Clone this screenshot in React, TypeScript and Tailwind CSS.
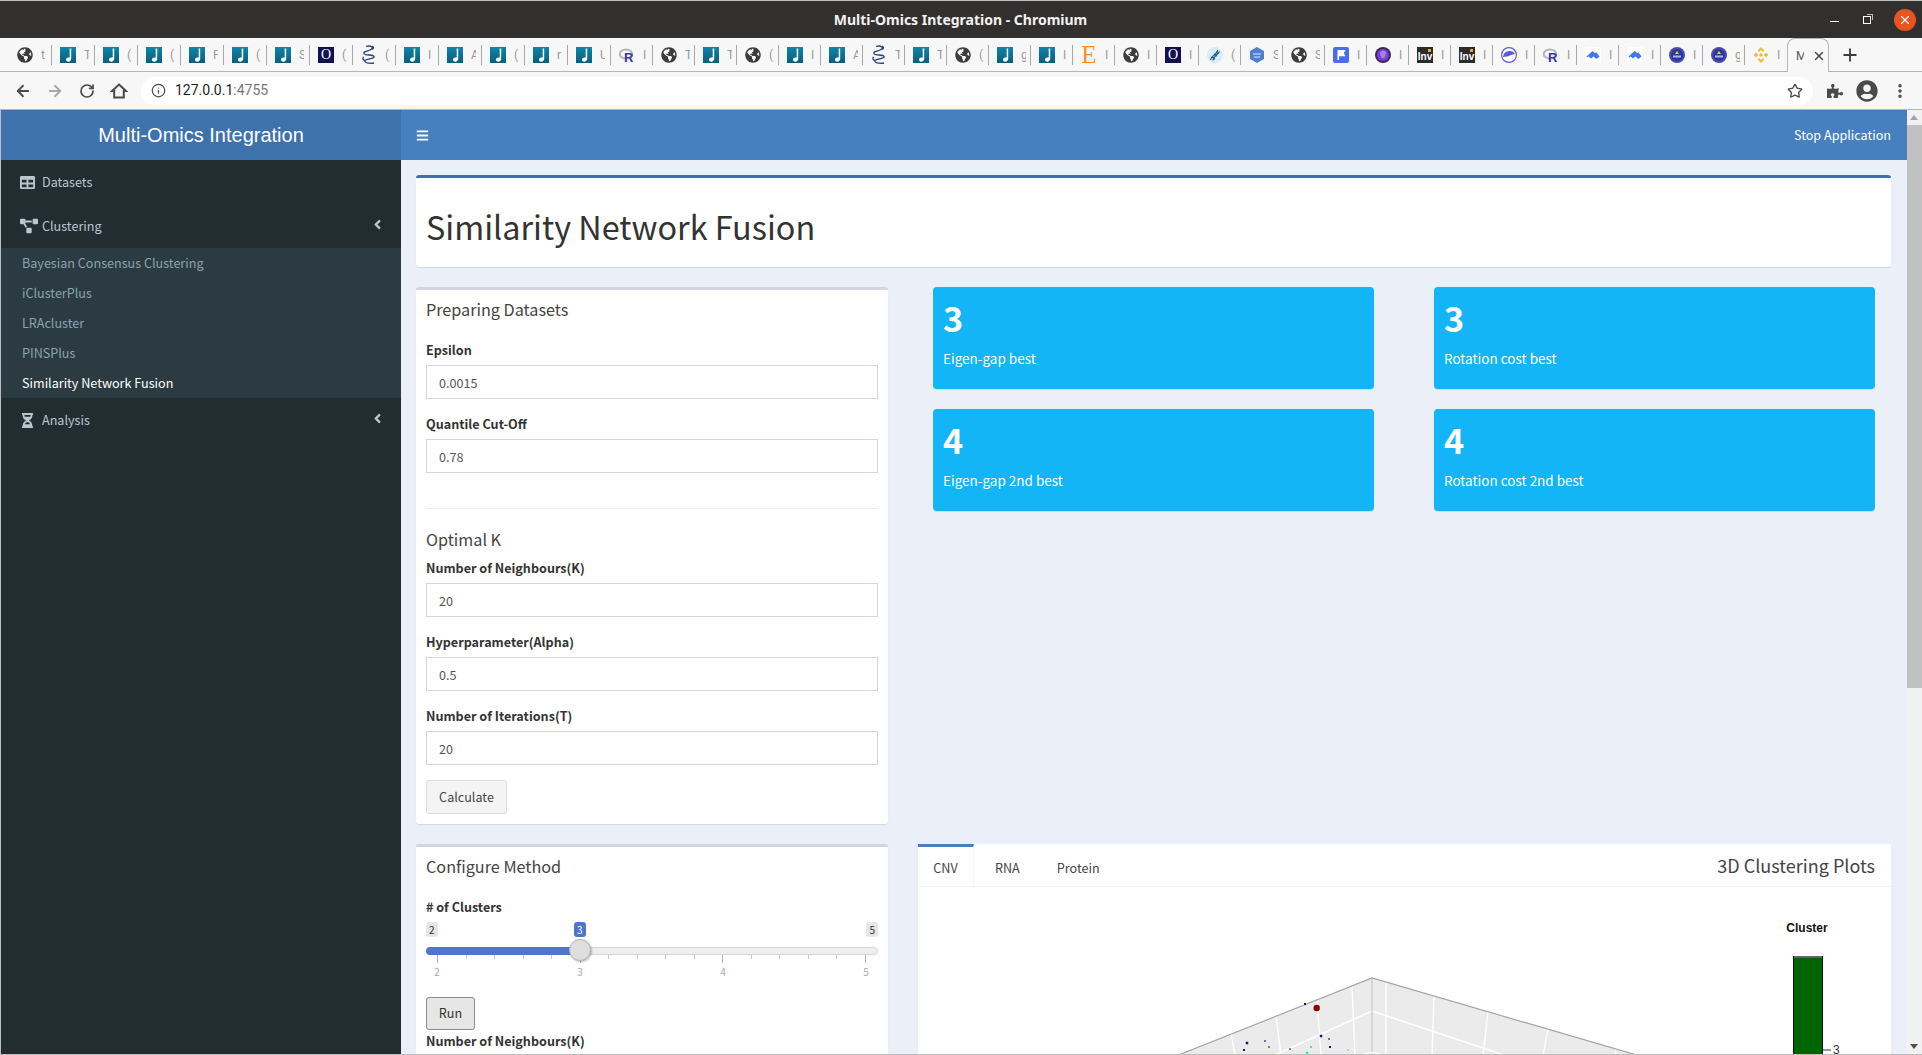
import type { ReactNode } from 'react'
import { ArrowLeft, ArrowRight, Info, MoreVertical, Plus, RotateCw, Star, X } from 'lucide-react'
import {
  FaAngleLeft,
  FaBars,
  FaGlobeAmericas,
  FaHourglassHalf,
  FaProjectDiagram,
  FaPuzzlePiece,
  FaTable,
  FaUserCircle,
} from 'react-icons/fa'

type TabKind =
  | 'globe'
  | 'note'
  | 'o'
  | 'helix'
  | 'r'
  | 'e'
  | 'dna'
  | 'hex'
  | 'flag'
  | 'orb'
  | 'inv'
  | 'disc'
  | 'cloud'
  | 'badge'
  | 'binance'

const tabs: [TabKind, string][] = [
  ['globe', 't'],
  ['note', 'T'],
  ['note', '('],
  ['note', '('],
  ['note', 'F'],
  ['note', '('],
  ['note', 'S'],
  ['o', '('],
  ['helix', '('],
  ['note', 'I'],
  ['note', 'A'],
  ['note', '('],
  ['note', 'r'],
  ['note', 'U'],
  ['r', 'I'],
  ['globe', 'T'],
  ['note', 'T'],
  ['globe', '('],
  ['note', 'I'],
  ['note', 'A'],
  ['helix', 'T'],
  ['note', 'T'],
  ['globe', '('],
  ['note', 'g'],
  ['note', 'I'],
  ['e', 'I'],
  ['globe', 'I'],
  ['o', 'I'],
  ['dna', '('],
  ['hex', 'S'],
  ['globe', 'S'],
  ['flag', 'I'],
  ['orb', 'I'],
  ['inv', 'I'],
  ['inv', 'I'],
  ['disc', 'I'],
  ['r', 'I'],
  ['cloud', 'I'],
  ['cloud', 'I'],
  ['badge', 'I'],
  ['badge', 'g'],
  ['binance', 'I'],
]

const Favicon = ({ kind }: { kind: TabKind }) => {
  if (kind === 'globe') return <FaGlobeAmericas className="size-4 text-[#3c3c3c]" />
  if (kind === 'note')
    return (
      <span className="flex size-4 items-center justify-center bg-gradient-to-b from-[#0d86ab] to-[#0b5d7a]">
        <svg viewBox="0 0 16 16" className="size-4">
          <path d="M9.700 1.500h1.500v10.300c0 1.700-1.300 2.900-3 2.900-1.300 0-2.300-.8-2.300-1.900 0-1.400 1.300-2.300 2.800-2.300.4 0 .7 0 1 .1z" fill="#fff" />
        </svg>
      </span>
    )
  if (kind === 'o')
    return (
      <span className="flex size-4 items-center justify-center bg-[#12104f] font-['Liberation_Serif',serif] text-[14px] leading-4 text-white">
        O
      </span>
    )
  if (kind === 'helix')
    return (
      <svg viewBox="0 0 16 20" className="h-5 w-4">
        <path
          d="M5 1.500c5-1.500 8 1 5 3S2 6 3 8.500s9 .5 10 3-8 2-9 4 4 3.500 9 2.500M11 1c2 1 2 2.500 0 3.500M3 12c-2 1-1 3 1 3.500"
          fill="none"
          stroke="#2f3f7f"
          strokeWidth="1.300"
        />
      </svg>
    )
  if (kind === 'r')
    return (
      <svg viewBox="0 0 16 16" className="size-4">
        <ellipse cx="7" cy="7" rx="6.200" ry="4.600" fill="none" stroke="#b4b4bc" strokeWidth="2" />
        <text x="5" y="15" fontSize="13" fontWeight="700" fontFamily="Liberation Sans, sans-serif" fill="#3a35a8">
          R
        </text>
      </svg>
    )
  if (kind === 'e')
    return (
      <span className="font-['Liberation_Serif',serif] text-[25px] leading-6 text-[#f7931e]">E</span>
    )
  if (kind === 'dna')
    return (
      <svg viewBox="0 0 16 16" className="size-4">
        <circle cx="8" cy="8" r="8" fill="#d6ecf8" />
        <path d="M3.500 13C5 7 9 9 11 3M6 13.500C6 9 11 8 12.500 4.500M5 10l3 2M7 7l3 2M9 5l2.500 1.500" fill="none" stroke="#2c5a78" strokeWidth="1.200" />
      </svg>
    )
  if (kind === 'hex')
    return (
      <svg viewBox="0 0 16 16" className="size-4">
        <path d="M8 0l7 4v8l-7 4-7-4V4z" fill="#4f7fd0" />
        <path d="M4 7h8M5 10h6" stroke="#dbe6f8" strokeWidth="1" />
      </svg>
    )
  if (kind === 'flag')
    return (
      <svg viewBox="0 0 16 16" className="size-4">
        <rect width="16" height="16" rx="2" fill="#4a6cf0" />
        <path d="M4.500 3v10h1.600V9.300h6.400L10.800 6.300 12.500 3z" fill="#fff" />
      </svg>
    )
  if (kind === 'orb')
    return (
      <svg viewBox="0 0 16 16" className="size-4">
        <circle cx="8" cy="8" r="8" fill="#3a2a55" />
        <circle cx="8" cy="8" r="6" fill="#7a3fd6" />
        <path d="M5 6.500a3 3 0 0 1 6 0c0 2-1.500 2.500-1.500 4.500h-3C6.500 9 5 8.500 5 6.500z" fill="#a582ee" />
      </svg>
    )
  if (kind === 'inv')
    return (
      <span className="relative flex size-4 items-end justify-center bg-[#2b2b2b] font-['Liberation_Sans',sans-serif] text-[10px] font-bold leading-[13px] text-white">
        Inv
        <span className="absolute right-0.5 top-0.5 size-[3px] bg-[#f2a81d]" />
      </span>
    )
  if (kind === 'disc')
    return (
      <svg viewBox="0 0 16 16" className="size-4">
        <circle cx="8" cy="8" r="7.400" fill="#fff" stroke="#5a5ad6" strokeWidth="1.200" />
        <path d="M2 10c3 0 6-1 8-2l4-1a6.500 6.500 0 0 0-12 3z" fill="#5a5ad6" />
      </svg>
    )
  if (kind === 'cloud')
    return (
      <svg viewBox="0 0 16 16" className="size-4">
        <rect width="16" height="16" rx="2" fill="#fff" />
        <path d="M1.500 9.500L7.500 4l2.500 2 1.500-.5 3 4-3 2.500-3-2.500-2.500 2-2.500-2-1.500 1z" fill="#3f78f2" />
      </svg>
    )
  if (kind === 'badge')
    return (
      <svg viewBox="0 0 16 16" className="size-4">
        <circle cx="8" cy="8" r="8" fill="#4b48b8" />
        <circle cx="8" cy="8" r="6" fill="#2b3a90" />
        <path d="M8 4l2 3H6z" fill="#e8d24a" />
        <rect x="4" y="8.500" width="8" height="2" fill="#a9b6e8" />
      </svg>
    )
  return (
    <svg viewBox="0 0 16 16" className="size-4">
      <g fill="#f3ba2f">
        <path d="M8 0l3.400 3.400-1.500 1.500L8 3 6.100 4.900 4.600 3.400z" />
        <path d="M8 16l3.400-3.400-1.500-1.500L8 13l-1.900-1.900-1.500 1.500z" />
        <path d="M3 5.700L5.300 8 3 10.300.7 8zM13 5.700L15.300 8 13 10.300 10.700 8zM8 5.900L10.100 8 8 10.100 5.900 8z" />
      </g>
    </svg>
  )
}

const TabStrip = () => (
  <div className="flex h-[34px] border-b border-[#b5b5b5] bg-[#f7f7f7] pl-[9px] font-['Roboto',sans-serif]">
    {tabs.map(([kind, letter], index) => (
      <div key={index} className={index < 14 ? 'flex w-[43px] items-center pl-2' : 'flex w-[42px] items-center pl-2'}>
        <span className="flex w-4 shrink-0 justify-center">
          <Favicon kind={kind} />
        </span>
        <span className="ml-2 w-[5px] overflow-hidden text-[12px] text-[#999]">{letter}</span>
        {index < tabs.length - 1 && <span className="ml-auto h-[20px] w-px bg-[#a8a8a8]" />}
      </div>
    ))}
    <div className="relative -mb-px flex w-[42px] items-center rounded-t-lg border border-b-0 border-[#b5b5b5] bg-[#f7f7f7] pl-2">
      <span className="w-[8px] overflow-hidden text-[12px] text-[#555]">M</span>
      <X size={14} strokeWidth={2.5} className="ml-2 text-[#444]" />
    </div>
    <Plus size={20} strokeWidth={2.2} className="ml-[11px] mt-[7px] text-[#3c3c3c]" />
  </div>
)

const TitleBar = () => (
  <div className="flex h-[37px] items-center bg-[#32302f]">
    <span className="ml-[832px] w-[257px] whitespace-nowrap text-center font-['Noto_Sans',sans-serif] text-[14px] font-bold text-[#f2f2f2]">
      Multi-Omics Integration - Chromium
    </span>
    <span className="ml-[741px] mt-1 h-px w-[9px] bg-white" />
    <span className="relative ml-[24px] size-[8px] border border-white">
      <span className="absolute -right-[3px] -top-[3px] size-[6px] border-r border-t border-[#bbb]" />
    </span>
    <span className="ml-[23px] flex size-[22px] items-center justify-center rounded-full bg-[#e95420]">
      <X size={14} strokeWidth={2} className="text-white" />
    </span>
  </div>
)

const AddressBar = () => (
  <div className="flex h-[38px] items-center border-b border-[#b5b5b5] bg-[#f7f7f7] text-[#4a4a4a]">
    <ArrowLeft size={18} strokeWidth={2.4} className="ml-[14px]" />
    <ArrowRight size={18} strokeWidth={2.4} className="ml-[14px] text-[#a8a8a8]" />
    <RotateCw size={16} strokeWidth={2.6} className="ml-[15px]" />
    <svg viewBox="0 0 18 18" className="ml-[15px] size-[18px]">
      <path d="M9 2.500L16 9h-2.200v6.500H4.200V9H2z" fill="none" stroke="currentColor" strokeWidth="2" />
    </svg>
    <div className="ml-[13px] flex h-7 w-[1672px] items-center rounded-full bg-white pl-[10px]">
      <Info size={15} strokeWidth={2} />
      <span className="ml-[9px] font-['Roboto',sans-serif] text-[14px] text-[#222]">
        127.0.0.1<span className="text-[#777]">:4755</span>
      </span>
      <Star size={16} strokeWidth={2} className="ml-auto mr-[10px]" />
    </div>
    <FaPuzzlePiece size={16} className="ml-[14px]" />
    <FaUserCircle size={22} className="ml-[13px]" />
    <MoreVertical size={18} strokeWidth={2.6} className="ml-[13px]" />
  </div>
)

const NavItem = ({ icon, label, arrow }: { icon: ReactNode; label: string; arrow?: boolean }) => (
  <div className="flex h-11 items-center pl-[19px] pr-4 text-[12.6px] text-[#b8c7ce]">
    <span className="flex w-[22px] shrink-0 justify-start">{icon}</span>
    <span>{label}</span>
    {arrow && <FaAngleLeft size={15} className="-mt-[3px] ml-auto" />}
  </div>
)

const subItems = ['Bayesian Consensus Clustering', 'iClusterPlus', 'LRAcluster', 'PINSPlus', 'Similarity Network Fusion']

const Sidebar = () => (
  <aside className="flex w-[400px] shrink-0 flex-col bg-[#222d32]">
    <div className="flex h-[50px] shrink-0 items-center justify-center bg-[#3e72ac] font-['Liberation_Sans',sans-serif] text-[20px] text-white">
      Multi-Omics Integration
    </div>
    <NavItem icon={<FaTable size={15} />} label="Datasets" />
    <NavItem icon={<FaProjectDiagram size={18} />} label="Clustering" arrow />
    <ul className="bg-[#2c3b41]">
      {subItems.map((item, index) => (
        <li
          key={item}
          className={
            index === 4
              ? 'flex h-[30px] items-center pl-[21px] text-[12.6px] text-white'
              : 'flex h-[30px] items-center pl-[21px] text-[12.6px] text-[#8aa4af]'
          }
        >
          {item}
        </li>
      ))}
    </ul>
    <NavItem icon={<FaHourglassHalf size={15} />} label="Analysis" arrow />
  </aside>
)

const Field = ({ label, value }: { label: string; value: string }) => (
  <div className="mb-[15px]">
    <label className="mb-[5px] block text-[12.6px] font-bold leading-5 text-[#333]">{label}</label>
    <input
      readOnly
      value={value}
      className="block h-[34px] w-full border border-[#d2d6de] bg-white px-3 text-[12.6px] leading-5 text-[#555]"
    />
  </div>
)

const BoxHeading = ({ children }: { children: ReactNode }) => (
  <h3 className="flex h-[39px] items-center text-[16.2px] text-[#444]">{children}</h3>
)

const StatBox = ({ value, label }: { value: string; label: string }) => (
  <div className="h-[102px] rounded-sm bg-[#13b5f6] px-[10px] pt-[9px] text-white shadow-[0_1px_1px_rgba(0,0,0,0.1)]">
    <p className="h-[42px] text-[34.2px] font-bold leading-[42px]">{value}</p>
    <p className="mt-[10px] text-[13.5px] leading-5">{label}</p>
  </div>
)

const PreparingBox = () => (
  <section className="h-[537px] w-[472px] shrink-0 rounded-[3px] border-t-[3px] border-[#d2d6de] bg-white px-[10px] shadow-[0_1px_1px_rgba(0,0,0,0.1)]">
    <BoxHeading>Preparing Datasets</BoxHeading>
    <div className="mt-[11px]">
      <Field label="Epsilon" value="0.0015" />
      <Field label="Quantile Cut-Off" value="0.78" />
    </div>
    <hr className="mt-[35px] border-[#eee]" />
    <h3 className="mt-5 text-[16.2px] leading-5 text-[#444]">Optimal K</h3>
    <div className="mt-[9px]">
      <Field label="Number of Neighbours(K)" value="20" />
      <Field label="Hyperparameter(Alpha)" value="0.5" />
      <Field label="Number of Iterations(T)" value="20" />
    </div>
    <button className="h-[34px] w-[81px] rounded-[3px] border border-[#ddd] bg-[#f4f4f4] text-[12.6px] text-[#444]">
      Calculate
    </button>
  </section>
)

const ticks = Array.from({ length: 16 }, (_, index) => index)

const ClusterSlider = () => (
  <div className="relative mt-[5px] h-[75px]">
    <div className="flex justify-between">
      <span className="h-[15px] rounded-[3px] bg-[#e6e6e6] px-[3px] text-[10px] leading-[15px] text-[#333]">2</span>
      <span className="h-[15px] rounded-[3px] bg-[#e6e6e6] px-[3px] text-[10px] leading-[15px] text-[#333]">5</span>
    </div>
    <span className="absolute left-[148px] top-0 h-[15px] rounded-[3px] bg-[#4f75cf] px-[3px] text-[10px] leading-[15px] text-white">
      3
    </span>
    <div className="relative mt-[10px] h-2 rounded-full border border-[#d8d8d8] bg-[#eeeeee]">
      <div className="absolute -bottom-px -left-px -top-px w-[150px] rounded-l-full bg-[#4f75cf]" />
      <div className="absolute -top-[9px] left-[142px] size-[22px] rounded-full border border-[#b5b5b5] bg-[#dedede] shadow-[1px_1px_2px_rgba(0,0,0,0.25)]" />
    </div>
    <div className="ml-[11px] flex w-[429px] justify-between">
      {ticks.map(tick => (
        <span key={tick} className={tick % 5 === 0 ? 'h-2 w-px bg-[#9fb4e5]' : 'h-1 w-px bg-[#c4c9d4]'} />
      ))}
    </div>
    <div className="ml-[11px] mt-[3px] flex w-[429px] justify-between text-[10px] leading-3 text-[#aaa]">
      {['2', '3', '4', '5'].map(label => (
        <span key={label} className="flex w-0 justify-center">
          {label}
        </span>
      ))}
    </div>
  </div>
)

const ConfigureBox = () => (
  <section className="h-[300px] w-[472px] shrink-0 rounded-[3px] border-t-[3px] border-[#d2d6de] bg-white px-[10px] shadow-[0_1px_1px_rgba(0,0,0,0.1)]">
    <BoxHeading>Configure Method</BoxHeading>
    <label className="mt-[11px] block text-[12.6px] font-bold leading-5 text-[#333]">&#35; of Clusters</label>
    <ClusterSlider />
    <button className="block h-[33px] w-[49px] rounded-[3px] border border-[#8c8c8c] bg-[#e6e6e6] text-[12.6px] text-[#333]">
      Run
    </button>
    <label className="mt-px block text-[12.6px] font-bold leading-5 text-[#333]">Number of Neighbours(K)</label>
  </section>
)

const gridLines = [
  [1276, 1015, 1281, 1056],
  [1231, 1033, 1235, 1056],
  [1317, 1000, 1321, 1056],
  [1352, 985, 1355, 1056],
  [1386, 983, 1386, 1056],
  [1434, 996, 1432, 1056],
  [1488, 1011, 1483, 1056],
  [1548, 1028, 1543, 1056],
  [1616, 1048, 1615, 1056],
]

const scatter = [
  [1305, 1004, '#33009a', 2],
  [1321, 1036, '#33009a', 2.5],
  [1247, 1043, '#33009a', 2.5],
  [1244, 1050, '#33009a', 2],
  [1265, 1041, '#33009a', 1.5],
  [1269, 1047, '#8b0000', 1.5],
  [1290, 1049, '#33009a', 1.5],
  [1329, 1039, '#33009a', 1.5],
  [1330, 1047, '#33009a', 2],
  [1311, 1047, '#3cf08c', 2],
  [1348, 1050, '#3cf08c', 1.5],
  [1307, 1053, '#3cf08c', 2.5],
] as const

const Plot = () => (
  <svg viewBox="918 887 973 168" className="block h-[168px] w-[973px]">
    <path d="M1372 978L1176 1056H1640z" fill="#ebebeb" />
    {gridLines.map(([x1, y1, x2, y2]) => (
      <line key={x1} x1={x1} y1={y1} x2={x2} y2={y2} stroke="#fff" strokeWidth="1.4" />
    ))}
    <path d="M1273 1056L1372 1011L1507 1056M1358 1056L1372 1052L1386 1056" fill="none" stroke="#fff" strokeWidth="1.6" />
    <line x1="1372" y1="978" x2="1372" y2="1052" stroke="#cfcfcf" strokeWidth="1.5" />
    <path d="M1176 1056L1372 978L1640 1056" fill="none" stroke="#a3a3a3" strokeWidth="1.2" />
    {scatter.map(([x, y, color, size]) => (
      <rect key={`${x}-${y}`} x={x - size / 2} y={y - size / 2} width={size} height={size} fill={color} />
    ))}
    <circle cx="1316.7" cy="1008" r="3.2" fill="#8b0000" />
    <text x="1807" y="932" textAnchor="middle" fontFamily="Liberation Sans, sans-serif" fontSize="12" fontWeight="700" fill="#111">
      Cluster
    </text>
    <rect x="1793.5" y="956.5" width="29" height="110" fill="#006400" stroke="#111" />
    <rect x="1794" y="956" width="28" height="2" fill="#666" />
    <line x1="1823" y1="1050" x2="1831" y2="1050" stroke="#333" />
    <text x="1833" y="1054" fontFamily="Liberation Sans, sans-serif" fontSize="12" fill="#333">
      3
    </text>
  </svg>
)

const PlotTabs = () => (
  <section className="flex-1 rounded-[3px] bg-white shadow-[0_1px_1px_rgba(0,0,0,0.1)]">
    <div className="flex h-[43px] items-center border-b border-[#f4f4f4] text-[12.6px] text-[#444]">
      <span className="flex h-[43px] w-[56px] items-center justify-center border-r border-t-[3px] border-r-[#f4f4f4] border-t-[#4680bf] pt-[3px]">
        CNV
      </span>
      <span className="ml-[21px] pt-[6px]">RNA</span>
      <span className="ml-[37px] pt-[6px]">Protein</span>
      <span className="ml-auto pr-4 text-[18px] text-[#444]">3D Clustering Plots</span>
    </div>
    <Plot />
  </section>
)

const Scrollbar = () => (
  <div className="relative w-[15px] shrink-0 bg-[#f1f1f1]">
    <span className="absolute left-[3px] top-[5px] border-x-[4px] border-b-[5px] border-x-transparent border-b-[#a3a3a3]" />
    <div className="absolute inset-x-0 top-[15px] h-[563px] bg-[#c1c1c1]" />
    <span className="absolute bottom-[5px] left-[3px] border-x-[4px] border-t-[5px] border-x-transparent border-t-[#505050]" />
  </div>
)

const Content = () => (
  <div className="flex min-w-0 flex-1 flex-col overflow-hidden bg-[#ebeff7]">
    <header className="flex h-[50px] shrink-0 items-center justify-between bg-[#4680bf] pl-[15px] pr-4 text-[12.6px] text-white">
      <FaBars size={13} />
      <span>Stop Application</span>
    </header>
    <main className="pl-[15px] pr-4 pt-[15px]">
      <div className="flex h-[92px] items-center rounded-[3px] border-t-[3px] border-[#3e72ac] bg-white pl-[10px] pt-[6px] shadow-[0_1px_1px_rgba(0,0,0,0.1)]">
        <h1 className="text-[32.4px] leading-10 text-[#333]">Similarity Network Fusion</h1>
      </div>
      <div className="mt-5 flex">
        <PreparingBox />
        <div className="ml-[45px] grid h-fit w-[942px] grid-cols-[441px_441px] gap-x-[60px] gap-y-5">
          <StatBox value="3" label="Eigen-gap best" />
          <StatBox value="3" label="Rotation cost best" />
          <StatBox value="4" label="Eigen-gap 2nd best" />
          <StatBox value="4" label="Rotation cost 2nd best" />
        </div>
      </div>
      <div className="mt-5 flex gap-[30px]">
        <ConfigureBox />
        <PlotTabs />
      </div>
    </main>
  </div>
)

const App = () => (
  <div className="flex h-[1055px] w-[1922px] flex-col overflow-hidden border-y border-[#bdbdbd] bg-[#bdbdbd] font-['Noto_Sans_CJK_SC','Source_Sans_Pro',sans-serif]">
    <TitleBar />
    <TabStrip />
    <AddressBar />
    <div className="flex min-h-0 flex-1 pl-px">
      <Sidebar />
      <Content />
      <Scrollbar />
    </div>
  </div>
)

export default App
